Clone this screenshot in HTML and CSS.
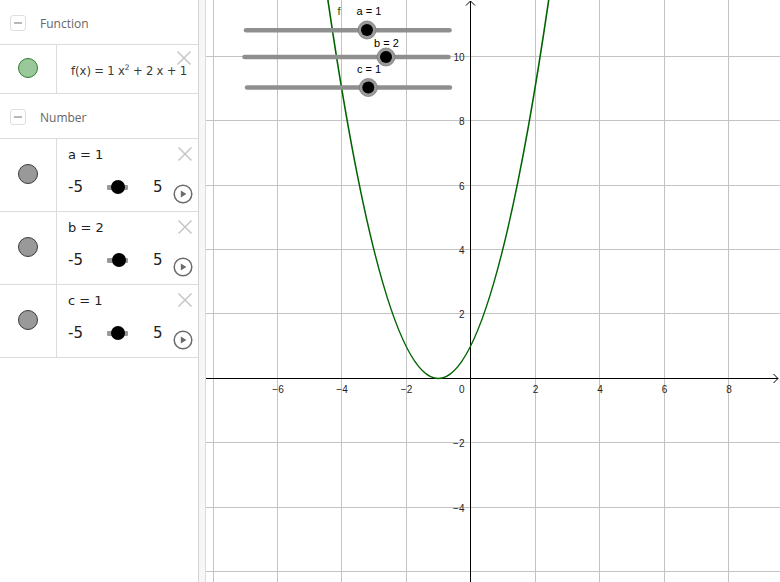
FILE: index.html
```html
<!DOCTYPE html>
<html>
<head>
<meta charset="utf-8">
<link rel="stylesheet" href="styles.css">
</head>
<body>
<div class="app">
  <aside class="algebra">
    <div class="group-header">
      <span class="collapse"><span class="dash"></span></span>
      <span class="group-title">Function</span>
    </div>
    <div class="item item-fn">
      <div class="marble-cell"><span class="marble marble-green"></span></div>
      <div class="content content-fn">
        <span class="formula">f(x) <span class="op">=</span> 1 x<sup>2</sup> <span class="op">+</span> 2 x <span class="op">+</span> 1</span>
        <svg class="close close-fn" viewBox="0 0 16 16"><path d="M1.5 1.5L14.5 14.5M14.5 1.5L1.5 14.5"/></svg>
      </div>
    </div>
    <div class="group-header">
      <span class="collapse"><span class="dash"></span></span>
      <span class="group-title">Number</span>
    </div>

    <div class="item item-num">
      <div class="marble-cell"><span class="marble"></span></div>
      <div class="content">
        <div class="label-row">
          <span class="label">a = 1</span>
          <svg class="close" viewBox="0 0 16 16"><path d="M1.5 1.5L14.5 14.5M14.5 1.5L1.5 14.5"/></svg>
        </div>
        <div class="slider-row">
          <span class="min">-5</span>
          <span class="track"><span class="knob"></span></span>
          <span class="max">5</span>
          <svg class="play" viewBox="0 0 20 20"><circle cx="10" cy="10" r="8.8"/><path d="M7.8 6.4L13.4 10L7.8 13.6Z"/></svg>
        </div>
      </div>
    </div>

    <div class="item item-num">
      <div class="marble-cell"><span class="marble"></span></div>
      <div class="content">
        <div class="label-row">
          <span class="label">b = 2</span>
          <svg class="close" viewBox="0 0 16 16"><path d="M1.5 1.5L14.5 14.5M14.5 1.5L1.5 14.5"/></svg>
        </div>
        <div class="slider-row">
          <span class="min">-5</span>
          <span class="track"><span class="knob knob-b"></span></span>
          <span class="max">5</span>
          <svg class="play" viewBox="0 0 20 20"><circle cx="10" cy="10" r="8.8"/><path d="M7.8 6.4L13.4 10L7.8 13.6Z"/></svg>
        </div>
      </div>
    </div>

    <div class="item item-num">
      <div class="marble-cell"><span class="marble"></span></div>
      <div class="content">
        <div class="label-row">
          <span class="label">c = 1</span>
          <svg class="close" viewBox="0 0 16 16"><path d="M1.5 1.5L14.5 14.5M14.5 1.5L1.5 14.5"/></svg>
        </div>
        <div class="slider-row">
          <span class="min">-5</span>
          <span class="track"><span class="knob"></span></span>
          <span class="max">5</span>
          <svg class="play" viewBox="0 0 20 20"><circle cx="10" cy="10" r="8.8"/><path d="M7.8 6.4L13.4 10L7.8 13.6Z"/></svg>
        </div>
      </div>
    </div>
  </aside>
  <div class="splitter"></div>
  <main class="graphics">
    <svg class="plot" width="574" height="582" viewBox="206 0 574 582">
      <g class="grid">
        <path d="M213.5 0V582M277.5 0V582M341.5 0V582M406.5 0V582M535.5 0V582M599.5 0V582M664.5 0V582M728.5 0V582"/>
        <path d="M206 56.5H780M206 120.5H780M206 185.5H780M206 249.5H780M206 313.5H780M206 442.5H780M206 507.5H780M206 571.5H780"/>
      </g>
      <g class="axes">
        <path d="M206 378.5H778M773.5 374L778 378.5L773.5 383"/>
        <path d="M470.5 582V1M466 5.5L470.5 1L475 5.5"/>
      </g>
      <g class="ticks">
        <text x="278" y="392.5" text-anchor="middle">−6</text>
        <text x="342" y="392.5" text-anchor="middle">−4</text>
        <text x="406.5" y="392.5" text-anchor="middle">−2</text>
        <text x="535.5" y="392.5" text-anchor="middle">2</text>
        <text x="600" y="392.5" text-anchor="middle">4</text>
        <text x="664.5" y="392.5" text-anchor="middle">6</text>
        <text x="729" y="392.5" text-anchor="middle">8</text>
        <text x="464.5" y="392.5" text-anchor="end">0</text>
        <text x="464.5" y="60.5" text-anchor="end">10</text>
        <text x="464.5" y="124.5" text-anchor="end">8</text>
        <text x="464.5" y="189.5" text-anchor="end">6</text>
        <text x="464.5" y="253.5" text-anchor="end">4</text>
        <text x="464.5" y="317.5" text-anchor="end">2</text>
        <text x="464.5" y="446.5" text-anchor="end">−2</text>
        <text x="464.5" y="511.5" text-anchor="end">−4</text>
      </g>
      <path class="curve" d="M325.6 -15.95Q438.3 772.95 551 -15.95"/>
      <text class="fn-label" x="337.5" y="15">f</text>
      <g class="gslider">
        <path class="gtrack" d="M246 30.3H449.5"/>
        <circle class="ring" cx="367" cy="30" r="9"/>
        <circle class="dot" cx="367" cy="30" r="6"/>
        <text class="slabel" x="356.5" y="15">a = 1</text>
      </g>
      <g class="gslider">
        <path class="gtrack" d="M244.5 57H448.5"/>
        <circle class="ring" cx="386" cy="57" r="9"/>
        <circle class="dot" cx="386" cy="57" r="6"/>
        <text class="slabel" x="374" y="46.5">b = 2</text>
      </g>
      <g class="gslider">
        <path class="gtrack" d="M247 87.5H450"/>
        <circle class="ring" cx="368.3" cy="87.5" r="9"/>
        <circle class="dot" cx="368.3" cy="87.5" r="6"/>
        <text class="slabel" x="357" y="72.5">c = 1</text>
      </g>
    </svg>
  </main>
</div>
</body>
</html>
```

FILE: styles.css
```css
* { box-sizing: border-box; }
body { margin: 0; font-family: "DejaVu Sans", sans-serif; background: #fff; }

.app {
  display: flex;
  width: 780px;
  height: 582px;
  overflow: hidden;
  background: #fff;
}

.algebra {
  flex: none;
  width: 199px;
  border-right: 1px solid #d3d3d3;
  background: #fff;
}

.splitter {
  flex: none;
  width: 7px;
  background: #f7f7f7;
  border-right: 1px solid #dadada;
}

.graphics {
  flex: 1;
  background: #fff;
}

.plot { display: block; }

/* group headers */
.group-header {
  height: 45px;
  border-bottom: 1px solid #dcdcdc;
  display: flex;
  align-items: center;
  gap: 14px;
  padding-left: 10px;
  padding-top: 2px;
}
.collapse {
  width: 16px;
  height: 16px;
  border: 1px solid #dedede;
  border-radius: 3px;
  display: flex;
  align-items: center;
  justify-content: center;
}
.dash {
  width: 8px;
  height: 1.5px;
  background: #b8b8b8;
}
.group-title {
  font-family: "Open Sans", "Noto Sans", sans-serif;
  font-size: 12px;
  color: #666;
}

/* items */
.item {
  display: flex;
  border-bottom: 1px solid #dcdcdc;
}
.item-fn { height: 49px; }
.item-num { height: 73px; }

.marble-cell {
  flex: none;
  width: 57px;
  border-right: 1px solid #dcdcdc;
  display: flex;
  align-items: center;
  justify-content: center;
  padding-bottom: 3px;
}
.item-fn .marble-cell { padding-bottom: 2px; }
.marble {
  width: 20px;
  height: 20px;
  border-radius: 50%;
  background: #999;
  border: 1px solid #3a3a3a;
}
.marble-green {
  background: #9bc89b;
  border-color: #2b7d2b;
}

.content {
  flex: 1;
  padding: 5px 6px 0 11px;
}
.content-fn {
  position: relative;
  display: flex;
  align-items: center;
  padding: 3px 0 0 14px;
}
.formula {
  font-size: 11.6px;
  color: #3a3a3a;
  white-space: nowrap;
  word-spacing: -0.4px;
}
.formula sup {
  font-size: 7.5px;
  vertical-align: 5px;
  line-height: 0;
}
.close {
  width: 16px;
  height: 16px;
  flex: none;
}
.close path {
  stroke: #c6c6c6;
  stroke-width: 1.5;
  fill: none;
}
.close-fn {
  position: absolute;
  top: 5px;
  right: 6px;
}

.label-row {
  height: 20px;
  display: flex;
  align-items: center;
  justify-content: space-between;
}
.label {
  font-size: 13px;
  color: #222;
}

.slider-row {
  margin-top: 10px;
  height: 26px;
  display: flex;
  align-items: center;
}
.min {
  width: 39px;
  font-size: 15px;
  color: #222;
}
.track {
  width: 21px;
  height: 5px;
  background: #999;
  border-radius: 1px;
  display: flex;
  align-items: center;
  padding-left: 4px;
}
.knob {
  width: 14px;
  height: 14px;
  border-radius: 50%;
  background: #000;
  flex: none;
}
.knob-b { margin-left: 1px; }
.max {
  margin-left: 25px;
  width: 21px;
  font-size: 15px;
  color: #222;
}
.play {
  width: 20px;
  height: 20px;
  flex: none;
  margin-top: 13px;
  margin-left: -1px;
}
.play circle {
  fill: none;
  stroke: #6b6b6b;
  stroke-width: 1.5;
}
.play path { fill: #6b6b6b; }

/* graphics */
.grid path {
  stroke: #c3c3c3;
  stroke-width: 1;
  fill: none;
}
.axes path {
  stroke: #000;
  stroke-width: 1;
  fill: none;
}
.ticks text {
  font-family: "Liberation Sans", Arial, sans-serif;
  font-size: 10px;
  fill: #222;
}
.curve {
  fill: none;
  stroke: #006400;
  stroke-width: 1.6;
}
.fn-label {
  font-family: "Liberation Sans", Arial, sans-serif;
  font-size: 11px;
  fill: #006400;
}
.gtrack {
  stroke: #8f8f8f;
  stroke-width: 4.5;
  stroke-linecap: round;
  fill: none;
}
.ring {
  fill: #9a9a9a;
  stroke: #7a7a7a;
  stroke-width: 0.8;
}
.dot { fill: #000; }
.slabel {
  font-family: "Liberation Sans", Arial, sans-serif;
  font-size: 11px;
  fill: #000;
}
```
